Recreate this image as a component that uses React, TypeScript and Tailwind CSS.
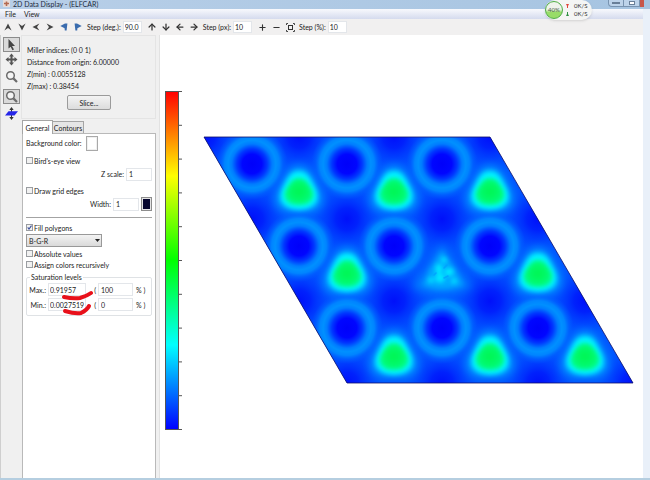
import type { ReactNode } from 'react';
import { ArrowDown, ArrowLeft, ArrowRight, ArrowUp, Minus, Plus } from 'lucide-react';

const rings = [
  [92, 129], [187, 129], [282, 129],
  [139, 211], [234, 211], [330, 211],
  [187, 293], [282, 293], [378, 293],
];

const peaks = [
  [139, 157], [234, 157], [330, 157],
  [187, 239], [378, 239],
  [234, 322], [330, 322], [425, 322],
];

const wells = [
  [44, 102], [139, 102], [234, 102], [330, 102],
  [92, 184], [187, 184], [282, 184], [378, 184],
  [139, 266], [234, 266], [330, 266], [425, 266],
  [187, 348], [282, 348], [378, 348], [473, 348],
];

const ticks = [0, 1, 2, 3, 4, 5, 6, 7, 8, 9, 10];

const field = 'border border-[#e3e6ea] bg-white text-[7px] text-[#222] outline-none';

function HeadIcon({ turn = 0 }: { turn?: number }) {
  return (
    <svg className="size-2" viewBox="0 0 8 8">
      <path d="M4 0.5L7.6 7.4L4 5L0.4 7.4Z" fill="#444" transform={`rotate(${turn} 4 4)`} />
    </svg>
  );
}

function FlagIcon({ flip = false }: { flip?: boolean }) {
  return (
    <svg className="size-2" viewBox="0 0 8 8">
      <g transform={flip ? 'translate(8 0) scale(-1 1)' : undefined}>
        <path d="M0.3 3L5 0.6H7.4L6.6 7.6H4.8L4.6 5.2Z" fill="#3a6cae" />
      </g>
    </svg>
  );
}

function Magnifier() {
  return (
    <svg className="size-[13px]" viewBox="0 0 13 13" fill="none" stroke="#6b6b6b">
      <circle cx="5.5" cy="5.5" r="3.8" fill="#f4f4f4" strokeWidth="1.5" />
      <path d="M8.4 8.4L12 12" strokeWidth="2.2" />
    </svg>
  );
}

function ToolbarButton({ label, children }: { label: string; children: ReactNode }) {
  return (
    <button aria-label={label} className="flex w-[14px] items-center justify-center text-[#333]">
      {children}
    </button>
  );
}

function SideButton({ label, active, children }: { label: string; active?: boolean; children: ReactNode }) {
  return (
    <button
      aria-label={label}
      className={
        active
          ? 'flex h-[15px] w-[17px] items-center justify-center border border-[#8b8b8b] bg-[#dadada]'
          : 'flex h-[15px] w-[17px] items-center justify-center'
      }
    >
      {children}
    </button>
  );
}

function Check({ label, checked }: { label: string; checked?: boolean }) {
  return (
    <label className="flex h-[11px] items-center gap-px">
      <span className="relative flex">
        <input
          type="checkbox"
          defaultChecked={checked}
          className="peer size-[7px] appearance-none border border-[#9a9da1] bg-[#f1f1f1]"
        />
        <svg className="pointer-events-none absolute inset-0 hidden size-[7px] peer-checked:block" viewBox="0 0 7 7">
          <path d="M1.7 3.4L3 5L5.5 1.6" fill="none" stroke="#3b4f9b" strokeWidth="1.1" />
        </svg>
      </span>
      {label}
    </label>
  );
}

function Level({ label, value, percent }: { label: string; value: string; percent: string }) {
  return (
    <div className="flex h-[15px] items-center">
      <label className="flex items-center">
        <span className="w-5 pr-[2px] text-right">{label}</span>
        <input className={`${field} h-[13px] w-[38px] px-px`} defaultValue={value} />
      </label>
      <label className="flex items-center">
        <span className="w-3 pr-[2px] text-right">(</span>
        <input className={`${field} h-[13px] w-[35px] px-[2px]`} defaultValue={percent} />
        <span className="pl-[3px]">% )</span>
      </label>
    </div>
  );
}

function TitleBar() {
  return (
    <header className="relative flex h-[9px] items-start bg-linear-to-r from-[#b8cfe8] to-[#a6c4e1] pl-[3px]">
      <svg className="mr-[3px] size-[7px] shrink-0" viewBox="0 0 7 7">
        <rect width="7" height="7" fill="#e8dcd8" />
        <path d="M1 3.5H6M3.5 1.5V6" stroke="#b46a50" strokeWidth="1.6" />
      </svg>
      <h1 className="leading-[8px] text-[#1d2b3d]">2D Data Display - (ELFCAR)</h1>
      <div className="absolute top-0 right-[6px] flex h-[7px]">
        <button aria-label="Minimize" className="flex w-4 items-center justify-center rounded-bl-sm border border-t-0 border-[#7893b0] bg-[#bdd3ea]">
          <span className="h-[2px] w-2 border border-[#697f98] bg-white" />
        </button>
        <button aria-label="Maximize" className="flex w-4 items-center justify-center border border-t-0 border-l-0 border-[#7893b0] bg-[#bdd3ea]">
          <span className="h-1 w-[6px] border border-[#697f98] bg-white" />
        </button>
        <button aria-label="Close" className="w-1 bg-[#c8574b]" />
      </div>
      <div className="absolute top-0 right-[58px] z-10 flex h-5 w-[47px] items-center rounded-full bg-[#f4f5f4] shadow-sm">
        <div className="flex size-[18px] shrink-0 items-center justify-center rounded-full border border-[#4fae46] bg-linear-to-b from-[#eef3ec] from-45% to-[#98dc68] to-65% text-[6px] leading-none text-[#4a5a48]">
          40%
        </div>
        <div className="ml-[3px] flex flex-col text-[6px] leading-[8px] text-[#333]">
          <div className="flex items-center gap-[5px]">
            <svg className="h-1 w-[3px]" viewBox="0 0 3 4">
              <path d="M0 0H3L2 2V4H1V2Z" fill="#e04438" />
            </svg>
            0K/S
          </div>
          <div className="flex items-center gap-[5px]">
            <svg className="h-1 w-[3px]" viewBox="0 0 3 4">
              <path d="M0 4H3L2 2V0H1V2Z" fill="#2f8f42" />
            </svg>
            0K/S
          </div>
        </div>
      </div>
    </header>
  );
}

function Toolbar() {
  return (
    <div className="flex h-4 items-center bg-[#f1f0f0] pl-px">
      <ToolbarButton label="Rotate up"><HeadIcon /></ToolbarButton>
      <ToolbarButton label="Rotate down"><HeadIcon turn={180} /></ToolbarButton>
      <ToolbarButton label="Rotate left"><HeadIcon turn={270} /></ToolbarButton>
      <ToolbarButton label="Rotate right"><HeadIcon turn={90} /></ToolbarButton>
      <ToolbarButton label="Turn left"><FlagIcon /></ToolbarButton>
      <ToolbarButton label="Turn right"><FlagIcon flip /></ToolbarButton>
      <label className="flex items-center gap-[2px] pl-[2px]">
        Step (deg.):
        <input className={`${field} h-3 w-[19px] px-px`} defaultValue="90.0" />
      </label>
      <div className="ml-[3px] flex">
        <ToolbarButton label="Move up"><ArrowUp size={10} strokeWidth={3} /></ToolbarButton>
        <ToolbarButton label="Move down"><ArrowDown size={10} strokeWidth={3} /></ToolbarButton>
        <ToolbarButton label="Move left"><ArrowLeft size={10} strokeWidth={3} /></ToolbarButton>
        <ToolbarButton label="Move right"><ArrowRight size={10} strokeWidth={3} /></ToolbarButton>
      </div>
      <label className="flex items-center gap-[2px] pl-[2px]">
        Step (px):
        <input className={`${field} h-3 w-[19px] px-px`} defaultValue="10" />
      </label>
      <div className="ml-[3px] flex">
        <ToolbarButton label="Zoom in"><Plus size={9} strokeWidth={3} /></ToolbarButton>
        <ToolbarButton label="Zoom out"><Minus size={9} strokeWidth={3} /></ToolbarButton>
        <ToolbarButton label="Fit to window">
          <svg className="size-[9px]" viewBox="0 0 9 9" fill="none" stroke="#333">
            <rect x="2.5" y="2.5" width="4" height="4" />
            <path d="M0.5 2V0.5H2M7 0.5H8.5V2M8.5 7V8.5H7M2 8.5H0.5V7" strokeWidth="0.9" />
          </svg>
        </ToolbarButton>
      </div>
      <label className="flex items-center gap-[2px] pl-[2px]">
        Step (%):
        <input className={`${field} h-3 w-[19px] px-px`} defaultValue="10" />
      </label>
    </div>
  );
}

function SideTools() {
  return (
    <nav className="flex w-[21px] shrink-0 flex-col items-center border-l border-[#cfcfcf] bg-[#f0f0f0] pt-[2px]">
      <SideButton label="Select" active>
        <svg className="h-[13px] w-[11px]" viewBox="0 0 11 13">
          <path d="M2.5 1L9 8H6L8 11.5L6.4 12.3L4.7 8.8L2.5 10.5Z" fill="#444" />
        </svg>
      </SideButton>
      <SideButton label="Pan">
        <svg className="size-[13px]" viewBox="0 0 13 13" fill="#555">
          <path d="M6.5 0.5L9 3.5H7.5V5.5H9.5V4L12.5 6.5L9.5 9V7.5H7.5V9.5H9L6.5 12.5L4 9.5H5.5V7.5H3.5V9L0.5 6.5L3.5 4V5.5H5.5V3.5H4Z" />
        </svg>
      </SideButton>
      <div className="mt-[2px]">
        <SideButton label="Zoom"><Magnifier /></SideButton>
      </div>
      <div className="mt-[5px]">
        <SideButton label="Zoom area" active><Magnifier /></SideButton>
      </div>
      <div className="mt-[2px]">
        <SideButton label="Slice plane">
          <svg className="size-[13px]" viewBox="0 0 13 13">
            <path d="M6.5 0L8.7 3H7V10H8.7L6.5 13L4.3 10H6V3H4.3Z" fill="#333" />
            <path d="M3.5 4.3H13L9.5 8.5H0Z" fill="#2525e8" />
          </svg>
        </SideButton>
      </div>
    </nav>
  );
}

function SettingsPanel() {
  return (
    <aside className="flex w-[139px] shrink-0 flex-col border-r border-[#e2e2e2] bg-[#f0f0f0] pr-[3px]">
      <section className="flex h-[84px] flex-col border border-[#e4e4e4] pt-[8px] pl-[5px] leading-[12px]">
        <p>Miller indices: (0 0 1)</p>
        <p>Distance from origin: 6.00000</p>
        <p>Z(min) : 0.0055128</p>
        <p>Z(max) : 0.38454</p>
        <button className="mt-[3px] ml-[40px] h-[15px] w-[44px] rounded-xs border border-[#9b9b9b] bg-linear-to-b from-[#f4f4f4] to-[#dcdcdc]">
          Slice...
        </button>
      </section>

      <div role="tablist" className="flex h-[14px] items-end pl-px">
        <button role="tab" aria-selected="true" className="relative z-10 -mb-px h-[14px] w-[31px] border border-b-0 border-[#a5a5a5] bg-white">
          General
        </button>
        <button role="tab" aria-selected="false" className="h-3 w-[31px] border border-b-0 border-l-0 border-[#a5a5a5] bg-[#e6e6e6]">
          Contours
        </button>
      </div>

      <section role="tabpanel" className="ml-px flex flex-1 flex-col border border-b-0 border-[#b9b9b9] bg-white px-[3px] pt-px">
        <label className="flex h-4 items-center gap-1">
          Background color:
          <button aria-label="Background color" className="h-[15px] w-3 border border-[#a9a9a9] bg-white shadow-[inset_0_0_0_1px_#f0f0f0]" />
        </label>
        <div className="mt-1">
          <Check label="Bird's-eye view" />
        </div>
        <label className="mt-px flex h-[14px] items-center justify-end gap-[2px]">
          Z scale:
          <input className={`${field} h-[13px] w-[26px] px-[2px]`} defaultValue="1" />
        </label>
        <div className="mt-1">
          <Check label="Draw grid edges" />
        </div>
        <div className="mt-px flex h-[14px] items-center justify-end gap-[2px]">
          <label className="flex items-center gap-[2px]">
            Width:
            <input className={`${field} h-[13px] w-[26px] px-[2px]`} defaultValue="1" />
          </label>
          <button aria-label="Edge color" className="h-[14px] w-[11px] border border-[#8c8c8c] bg-[#06062e] shadow-[inset_0_0_0_1px_#e4e4e4]" />
        </div>
        <hr className="mt-[6px] mb-1 border-[#a3a3a3]" />
        <Check label="Fill polygons" checked />
        <div className="relative my-px w-[76px]">
          <select
            aria-label="Color scheme"
            className="block h-[13px] w-full appearance-none border border-[#999] bg-linear-to-b from-[#f3f3f3] to-[#dadada] pl-[2px] text-[7px] leading-[10px] outline-none"
          >
            <option>B-G-R</option>
          </select>
          <svg className="pointer-events-none absolute top-[5px] right-[2px] h-[3px] w-[5px]" viewBox="0 0 5 3">
            <path d="M0 0H5L2.5 3Z" fill="#222" />
          </svg>
        </div>
        <Check label="Absolute values" />
        <Check label="Assign colors recursively" />
        <fieldset className="relative mt-[2px] rounded-xs border border-[#dfe2e5] px-px pb-[3px]">
          <legend className="ml-[2px] px-px leading-[10px]">Saturation levels</legend>
          <Level label="Max.:" value="0.91957" percent="100" />
          <Level label="Min.:" value="0.0027519" percent="0" />
          <svg className="pointer-events-none absolute top-2 left-[35px] h-[28px] w-[32px]" viewBox="0 0 32 28" fill="none" stroke="#e8101a" strokeLinecap="round">
            <path d="M2 7Q11 9 18 8Q25 6 29 3" strokeWidth="4" />
            <path d="M3 21Q13 24 19 23Q25 20 27 16" strokeWidth="4" />
          </svg>
        </fieldset>
      </section>
    </aside>
  );
}

function DensityMap() {
  return (
    <svg className="block h-auto w-full" viewBox="0 0 483 443" role="img" aria-label="ELF density map">
      <defs>
        <linearGradient id="scale" x1="0" y1="0" x2="0" y2="1">
          <stop offset="0" stopColor="#ff0000" />
          <stop offset="0.25" stopColor="#ffff00" />
          <stop offset="0.5" stopColor="#00ff00" />
          <stop offset="0.75" stopColor="#00ffff" />
          <stop offset="1" stopColor="#0000ff" />
        </linearGradient>
        <radialGradient id="ring">
          <stop offset="0" stopColor="#0000fa" />
          <stop offset="0.27" stopColor="#0006ff" />
          <stop offset="0.42" stopColor="#0038ff" />
          <stop offset="0.56" stopColor="#007cff" />
          <stop offset="0.66" stopColor="#0090ff" />
          <stop offset="0.76" stopColor="#0084ff" />
          <stop offset="0.87" stopColor="#0060ff" stopOpacity="0.8" />
          <stop offset="1" stopColor="#0054ff" stopOpacity="0" />
        </radialGradient>
        <radialGradient id="well">
          <stop offset="0" stopColor="#0010fa" />
          <stop offset="0.3" stopColor="#0018fc" stopOpacity="0.85" />
          <stop offset="1" stopColor="#0048ff" stopOpacity="0" />
        </radialGradient>
        <radialGradient id="core">
          <stop offset="0" stopColor="#00f650" />
          <stop offset="0.6" stopColor="#00f968" />
          <stop offset="1" stopColor="#00fc88" />
        </radialGradient>
        <filter id="soft" x="-50%" y="-50%" width="200%" height="200%" colorInterpolationFilters="sRGB">
          <feGaussianBlur stdDeviation="2.4" />
        </filter>
        <filter id="fine" x="-50%" y="-50%" width="200%" height="200%" colorInterpolationFilters="sRGB">
          <feGaussianBlur stdDeviation="2" />
        </filter>
        <filter id="halo" x="-50%" y="-50%" width="200%" height="200%" colorInterpolationFilters="sRGB">
          <feGaussianBlur stdDeviation="4" />
        </filter>
        <g id="peak">
          <path d="M0 -27C10 -27 14 -16 19 -7C26 5 26 12 20 17C13 22 6 20 0 20C-6 20 -13 22 -20 17C-26 12 -26 5 -19 -7C-14 -16 -10 -27 0 -27Z" fill="#0090ff" filter="url(#halo)" />
          <path d="M0 -21C8 -21 11 -15 15 -7C19 0 20 6 17 11C13 16 7 18 0 18C-7 18 -13 16 -17 11C-20 6 -19 0 -15 -7C-11 -15 -8 -21 0 -21Z" fill="#00f4ff" filter="url(#soft)" />
          <path d="M0 -14C6 -14 9 -9 12 -4C15 1 15 5 12 9C9 12 5 13 0 13C-5 13 -9 12 -12 9C-15 5 -15 1 -12 -4C-9 -9 -6 -14 0 -14Z" fill="url(#core)" filter="url(#fine)" />
        </g>
        <clipPath id="cell">
          <path d="M44 102H330L473 348H187Z" />
        </clipPath>
      </defs>

      <rect x="5.5" y="56.5" width="13" height="338" fill="url(#scale)" stroke="#555" />
      {ticks.map((t) => (
        <path key={t} d={`M18 ${56.5 + t * 33.8}H22`} stroke="#555" />
      ))}

      <g clipPath="url(#cell)">
        <rect x="44" y="102" width="430" height="246" fill="#0056ff" />
        {wells.map(([x, y]) => (
          <circle key={`${x}-${y}`} cx={x} cy={y} r="37" fill="url(#well)" />
        ))}
        {rings.map(([x, y]) => (
          <circle key={`${x}-${y}`} cx={x} cy={y} r="36" fill="url(#ring)" />
        ))}
        {peaks.map(([x, y]) => (
          <use key={`${x}-${y}`} href="#peak" x={x} y={y} />
        ))}
        {/* disordered site */}
        <path d="M282 208L298 234L312 252Q282 266 252 252L266 234Z" fill="#0080ff" filter="url(#halo)" />
        <path d="M282 216L295 234L303 250Q282 258 263 250L270 234Z" fill="#00a8ff" filter="url(#soft)" />
        <g fill="#00e8ff" filter="url(#fine)">
          <ellipse cx="280" cy="243" rx="5" ry="4.5" />
          <ellipse cx="289" cy="237" rx="4.5" ry="4" />
          <ellipse cx="279" cy="234" rx="3.5" ry="5" />
          <circle cx="271" cy="245" r="2.5" />
          <circle cx="294" cy="246" r="2.5" />
          <circle cx="284" cy="225" r="2.5" />
        </g>
        <path d="M284 233L287 230M284 243L288 241M274 240L276 238" stroke="#00a0ff" strokeWidth="1.6" strokeLinecap="round" opacity="0.8" />
      </g>
      <path d="M44 102H330L473 348H187Z" fill="none" stroke="#10106a" strokeWidth="0.8" />
    </svg>
  );
}

export default function App() {
  return (
    <div className="flex min-h-screen flex-col border-b-2 border-[#b5cee0] bg-[#e9f0f9] font-[Lato,'Open_Sans',sans-serif] text-[7px] leading-[10px] text-[#222]">
      <TitleBar />
      <div className="mr-[7px] flex flex-1 flex-col">
        <nav className="flex h-[10px] items-center gap-2 bg-linear-to-b from-[#f8f9fd] to-[#d5dbee] pl-[5px]">
          <button>File</button>
          <button>View</button>
        </nav>
        <Toolbar />
        <div className="flex flex-1">
          <SideTools />
          <SettingsPanel />
          <main className="min-w-0 flex-1 bg-white">
            <DensityMap />
          </main>
        </div>
      </div>
    </div>
  );
}
